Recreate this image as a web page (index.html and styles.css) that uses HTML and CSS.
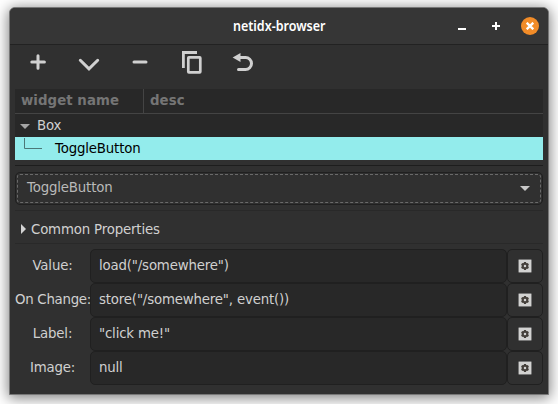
FILE: index.html
```html
<!DOCTYPE html>
<html lang="en">
<head>
<meta charset="utf-8">
<title>netidx-browser</title>
<link rel="stylesheet" href="styles.css">
</head>
<body>
<svg width="0" height="0" class="defs">
  <symbol id="gear" viewBox="0 0 14 14">
    <rect x=".5" y=".5" width="13" height="13" rx="1" fill="#d2d2d1" stroke="#777"/>
    <path d="M7 3v8M3.55 5l6.9 4M10.45 5l-6.9 4" stroke="#45403b" stroke-width="2.2"/>
    <circle cx="7" cy="7" r="2.2" fill="#d2d2d1" stroke="#45403b" stroke-width="1.9"/>
  </symbol>
</svg>
<div class="window">
  <header class="titlebar">
    <h1 class="title">netidx-browser</h1>
    <div class="controls">
      <svg width="8" height="8"><path d="M0 7h8" stroke="#fff" stroke-width="2"/></svg>
      <svg width="8" height="8"><path d="M0 4h8M4 0v8" stroke="#fff" stroke-width="2"/></svg>
      <span class="close"><svg width="8" height="8"><path d="M.7.7l6.6 6.6M7.3.7L.7 7.3" stroke="#fff" stroke-width="2.3"/></svg></span>
    </div>
  </header>
  <nav class="toolbar">
    <svg width="24" height="24"><path d="M5.8 12h12.6M12 5.7v12.6" stroke-width="3" stroke-linecap="round"/></svg>
    <svg width="24" height="24"><path d="M3.300 10.3L12 18.9l8.700-8.600" stroke-width="3" stroke-linecap="round"/></svg>
    <svg width="24" height="24"><path d="M6 12h12" stroke-width="3" stroke-linecap="round"/></svg>
    <svg width="24" height="24"><path d="M4.400 18V2.500H18" stroke-width="2.800"/><rect x="9.300" y="7.300" width="12" height="15" rx=".6" stroke-width="2.700"/></svg>
    <svg width="24" height="24"><path d="M10 7.500h5.500a5.800 5.800 0 0 1 0 12H8.500" stroke-width="3" stroke-linecap="round"/><path d="M2.600 7.500L10.500 3v9z" class="solid"/></svg>
  </nav>
  <main class="content">
    <div class="tree">
      <div class="tree-head"><span class="col-name">widget name</span><span class="col-desc">desc</span></div>
      <div class="tree-row"><svg class="expand" width="10" height="5"><path d="M0 0h10L5 5z" fill="#a5a5a5"/></svg>Box</div>
      <div class="tree-row selected"><svg class="branch" width="18" height="23"><path d="M.5 1v10.500H18" fill="none" stroke="#4c7878"/></svg>ToggleButton</div>
    </div>
    <div class="combo"><div class="focus"><span>ToggleButton</span><svg width="10" height="5"><path d="M0 0h10L5 5z" fill="#c8c8c8"/></svg></div></div>
    <div class="expander"><svg width="6" height="10"><path d="M0 0v10l5-5z" fill="#d3d3d3"/></svg>Common Properties</div>
    <div class="form">
      <div class="field"><label>Value:</label><div class="entry">load("/somewhere")</div><div class="button"><svg width="14" height="14"><use href="#gear"/></svg></div></div>
      <div class="field"><label class="wide">On Change:</label><div class="entry">store("/somewhere", event())</div><div class="button"><svg width="14" height="14"><use href="#gear"/></svg></div></div>
      <div class="field"><label>Label:</label><div class="entry">"click me!"</div><div class="button"><svg width="14" height="14"><use href="#gear"/></svg></div></div>
      <div class="field"><label>Image:</label><div class="entry">null</div><div class="button"><svg width="14" height="14"><use href="#gear"/></svg></div></div>
    </div>
  </main>
</div>
</body>
</html>
```
FILE: styles.css
```css
* { box-sizing: border-box; }
body {
  margin: 0;
  height: 404px;
  padding: 7px 9px 9px;
  overflow: hidden;
  background: #fff;
  font: 13.333px/23px "DejaVu Sans", sans-serif;
  letter-spacing: -.17px;
  color: #d0d0d0;
}
svg { display: block; flex: none; }
.defs { position: absolute; }
.window {
  height: 388px;
  border: 1px solid #777;
  border-radius: 6px 6px 0 0;
  background: #303030;
  box-shadow: 0 2px 14px 1px rgba(0, 0, 0, .5);
  overflow: hidden;
}
.titlebar {
  height: 37px;
  display: grid;
  grid-template-columns: 1fr auto 1fr;
  align-items: center;
  background: #363636;
  border-bottom: 1px solid #222;
}
.title {
  grid-column: 2;
  margin: 0;
  font: 600 13.700px/20px "Noto Sans", sans-serif;
  letter-spacing: 0;
  color: #fff;
  transform: translate(.6px, -.5px) scaleX(.915);
}
.controls {
  display: flex;
  justify-content: flex-end;
  align-items: center;
  gap: 26px;
  padding-right: 9px;
}
.close {
  width: 18px;
  height: 18px;
  margin-left: -5px;
  border-radius: 50%;
  background: #f28c28;
  display: grid;
  place-items: center;
}
.toolbar {
  height: 44px;
  display: flex;
  gap: 27px;
  padding: 5px 0 0 16px;
}
.toolbar svg { fill: none; stroke: #d0d0d0; overflow: visible; }
.toolbar .solid { fill: #d0d0d0; stroke: none; }
.content { padding: 0 5px; }
.tree { background: #282828; }
.tree-head {
  height: 25px;
  display: flex;
  border-bottom: 1px solid #444;
  font-weight: bold;
  letter-spacing: .05px;
  color: #757575;
}
.col-name { width: 129px; padding-left: 6px; border-right: 1px solid #444; }
.col-desc { padding-left: 6px; }
.tree-row { height: 23px; display: flex; align-items: center; padding-left: 5px; }
.expand { margin: 2px 7px 0 0; }
.selected { padding-left: 9px; background: #93ecec; color: #000; }
.branch { margin-right: 13px; }
.combo {
  margin-top: 5px;
  padding: 6px 0 5px;
  border-top: 1px solid #1d1d1d;
  border-bottom: 1px solid #292929;
}
.focus {
  height: 33px;
  display: flex;
  align-items: center;
  justify-content: space-between;
  padding: 0 12px 2px 11px;
  border: 1px solid #202020;
  border-radius: 5px;
  outline: 1px dashed #6a6a6a;
  outline-offset: -3px;
  color: #b9b9b9;
}
.focus svg { margin-top: 2px; }
.expander {
  height: 33px;
  display: flex;
  align-items: center;
  gap: 4px;
  padding: 4px 0 0 6px;
  border-bottom: 1px solid #292929;
}
.form { padding-top: 5px; }
.field { height: 34px; display: grid; grid-template-columns: 75px 417px 36px; }
label { line-height: 33px; text-align: center; white-space: nowrap; }
.wide { letter-spacing: -.27px; }
.entry, .button { border: 1px solid #202020; border-radius: 5px; }
.entry { padding-left: 8px; line-height: 31px; background: #282828; }
.button { display: grid; place-items: center; background: #303030; }
```
